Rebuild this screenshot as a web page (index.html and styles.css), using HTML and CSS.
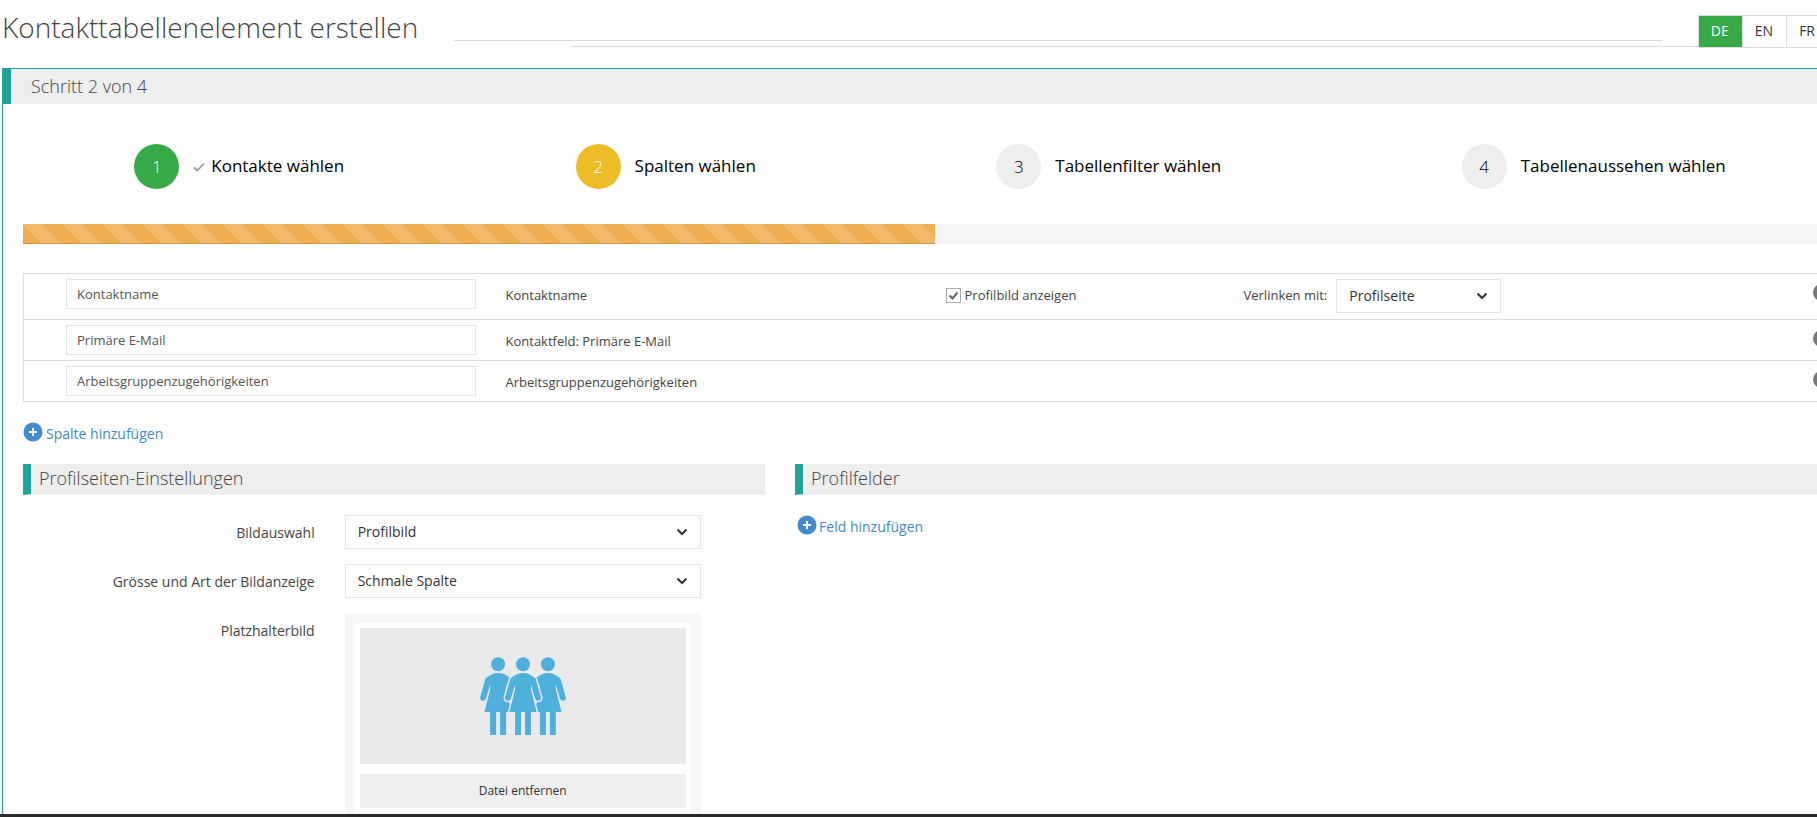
FILE: index.html
```html
<!DOCTYPE html>
<html lang="de">
<head>
    <meta charset="UTF-8">
    <meta name="viewport" content="width=device-width, initial-scale=1.0">
    <title>Kontakttabellenelement erstellen</title>
    <link rel="stylesheet" href="styles.css">
</head>
<body>
<div class="window">
    <div class="page">
        <!-- Title and language switch -->
        <header class="page-header">
            <h1 class="page-title">Kontakttabellenelement erstellen</h1>
            <div class="rules">
                <hr class="rule rule-top">
                <hr class="rule rule-bottom">
            </div>
            <div class="languages">
                <button type="button" class="active">DE</button>
                <button type="button">EN</button>
                <button type="button">FR</button>
            </div>
        </header>

        <main class="portlet">
            <h2 class="portlet-title">Schritt 2 von 4</h2>

            <div class="portlet-body">
                <!-- Wizard steps -->
                <ol class="steps">
                    <li class="step done">
                        <span class="number">1</span>
                        <span class="desc"><svg class="check" viewBox="0 0 12 10" width="12" height="10"><path d="M1 5.5 4.3 8.5 11 1.5" fill="none" stroke="#999" stroke-width="1.8"/></svg>Kontakte wählen</span>
                    </li>
                    <li class="step active">
                        <span class="number">2</span>
                        <span class="desc">Spalten wählen</span>
                    </li>
                    <li class="step">
                        <span class="number">3</span>
                        <span class="desc">Tabellenfilter wählen</span>
                    </li>
                    <li class="step">
                        <span class="number">4</span>
                        <span class="desc">Tabellenaussehen wählen</span>
                    </li>
                </ol>

                <div class="progress">
                    <div class="progress-bar" style="width: 50%"></div>
                </div>

                <!-- Columns of the contact table -->
                <table class="columns">
                    <colgroup>
                        <col class="col-name">
                        <col class="col-field">
                        <col class="col-option">
                        <col class="col-link">
                        <col class="col-remove">
                    </colgroup>
                    <tr>
                        <td><input type="text" class="text-input" aria-label="Spaltenname 1" value="Kontaktname"></td>
                        <td>Kontaktname</td>
                        <td><label class="check-label"><input type="checkbox" class="checkbox" checked>Profilbild anzeigen</label></td>
                        <td>
                            <div class="link-field">
                                <label for="link-with">Verlinken mit:</label>
                                <select id="link-with" class="select select-link"><option>Profilseite</option></select>
                            </div>
                        </td>
                        <td><button type="button" class="remove" aria-label="Spalte entfernen"></button></td>
                    </tr>
                    <tr>
                        <td><input type="text" class="text-input" aria-label="Spaltenname 2" value="Primäre E-Mail"></td>
                        <td>Kontaktfeld: Primäre E-Mail</td>
                        <td></td>
                        <td></td>
                        <td><button type="button" class="remove" aria-label="Spalte entfernen"></button></td>
                    </tr>
                    <tr>
                        <td><input type="text" class="text-input" aria-label="Spaltenname 3" value="Arbeitsgruppenzugehörigkeiten"></td>
                        <td>Arbeitsgruppenzugehörigkeiten</td>
                        <td></td>
                        <td></td>
                        <td><button type="button" class="remove" aria-label="Spalte entfernen"></button></td>
                    </tr>
                </table>

                <a href="#" class="add-link add-column">
                    <svg viewBox="0 0 20 20" width="20" height="20"><circle cx="10" cy="10" r="9.5" fill="#428bca"/><path d="M10 6v8M6 10h8" stroke="#fff" stroke-width="2"/></svg>
                    Spalte hinzufügen
                </a>

                <div class="row">
                    <!-- Profile page settings -->
                    <section class="col-settings">
                        <h3 class="section-title">Profilseiten-Einstellungen</h3>
                        <div class="form-group">
                            <label for="image-choice">Bildauswahl</label>
                            <select id="image-choice" class="select"><option>Profilbild</option></select>
                        </div>
                        <div class="form-group">
                            <label for="image-size">Grösse und Art der Bildanzeige</label>
                            <select id="image-size" class="select"><option>Schmale Spalte</option></select>
                        </div>
                        <div class="form-group">
                            <label for="remove-file">Platzhalterbild</label>
                            <div class="upload">
                                <div class="upload-inner">
                                    <div class="preview">
                                        <svg viewBox="30 50 258 235" width="86" height="78" fill="#4fb0db">
                                            <defs>
                                                <g id="legs"><path d="M-24 214h18v71h-18zM6 214h18v71h-18z"/><circle cx="0" cy="72" r="21"/></g>
                                                <path id="dress" d="M-38 115Q-20 98 0 98Q20 98 38 115L54 171Q55 181 46 182Q39 182 36 174L24 133V148L41 216H-41L-24 148V133L-36 174Q-39 182 -46 182Q-55 181 -54 171Z"/>
                                            </defs>
                                            <use href="#legs" x="84"/>
                                            <use href="#dress" x="84"/>
                                            <use href="#legs" x="234"/>
                                            <use href="#dress" x="234"/>
                                            <use href="#dress" x="159" stroke="#eaeaea" stroke-width="9"/>
                                            <use href="#dress" x="159"/>
                                            <use href="#legs" x="159"/>
                                        </svg>
                                    </div>
                                    <button type="button" id="remove-file" class="remove-file">Datei entfernen</button>
                                </div>
                            </div>
                        </div>
                    </section>

                    <!-- Profile fields -->
                    <section class="col-fields">
                        <h3 class="section-title">Profilfelder</h3>
                        <a href="#" class="add-link add-field">
                            <svg viewBox="0 0 20 20" width="20" height="20"><circle cx="10" cy="10" r="9.5" fill="#428bca"/><path d="M10 6v8M6 10h8" stroke="#fff" stroke-width="2"/></svg>
                            Feld hinzufügen
                        </a>
                    </section>
                </div>
            </div>
        </main>
    </div>
</div>
</body>
</html>
```

FILE: styles.css
```css
* {
    box-sizing: border-box;
}
body {
    margin: 0;
    font-family: "Open Sans", sans-serif;
    font-size: 14px;
    line-height: 20px;
    color: #444;
    background-color: #fff;
}
button, input, select {
    font-family: inherit;
    border-radius: 0;
    margin: 0;
}
.window {
    height: 100vh;
    overflow: hidden;
    border-bottom: 3px solid #2a2a2a;
}
/* the content is a little wider than the window and is cut off on the right */
.page {
    margin-right: -50px;
    padding-left: 2px;
}

/* Header */
.page-header {
    display: flex;
    align-items: flex-start;
    height: 68px;
    padding-right: 37px;
}
.page-title {
    margin: 0;
    padding-top: 7px;
    font-size: 28px;
    line-height: 40px;
    font-weight: 300;
}
.rules {
    flex: 1;
    padding-top: 40px;
}
.rule {
    height: 1px;
    border: 0;
    background-color: #ddd;
}
.rule-top {
    margin: 0 36px 5px;
}
.rule-bottom {
    margin: 0 0 0 154px;
}
.languages {
    display: flex;
    margin-top: 15px;
    border: 1px solid #ddd;
}
.languages button {
    height: 31px;
    padding: 0 13px 2px 12px;
    border: 0;
    border-right: 1px solid #ddd;
    font-size: 14px;
    color: #333;
    background-color: #fff;
}
.languages .active {
    color: #fff;
    background-color: #35aa47;
}

/* Panel */
.portlet {
    border: 1px solid #1ba39c;
}
.portlet-title {
    margin: 0;
    padding: 0 20px;
    border-left: 8px solid #1ba39c;
    font-size: 18px;
    line-height: 35px;
    font-weight: 300;
    background-color: #eee;
}
.portlet-body {
    padding: 40px 20px;
}

/* Steps */
.steps {
    display: flex;
    margin: 0 0 35px;
    padding: 0;
    list-style: none;
}
.step {
    display: flex;
    flex: 1 1 auto;
    align-items: center;
    justify-content: center;
    gap: 14px;
    font-size: 17px;
    color: #000;
}
/* keeps the check mark out of the width of the step */
.done {
    margin: 0 -9px;
}
.number {
    width: 45px;
    border-radius: 50%;
    line-height: 45px;
    text-align: center;
    font-weight: 300;
    background-color: #eee;
}
.desc {
    padding-bottom: 2px;
}
.done .number {
    color: #fff;
    background-color: #35aa47;
}
.active .number {
    color: #fff;
    background-color: #ecbc29;
}
.check {
    margin-right: 6px;
}
.progress {
    height: 20px;
    margin-bottom: 29px;
    background-color: #f4f4f4;
}
.progress-bar {
    height: 100%;
    background-color: #f0ad4e;
    background-image: linear-gradient(45deg, rgba(255,255,255,.15) 25%, transparent 25%, transparent 50%, rgba(255,255,255,.15) 50%, rgba(255,255,255,.15) 75%, transparent 75%, transparent);
    background-size: 40px 40px;
    box-shadow: inset 0 -1px 0 rgba(0,0,0,.15);
}

/* Columns table */
.columns {
    width: 100%;
    table-layout: fixed;
    border-collapse: collapse;
    border: 1px solid #ddd;
    font-size: 13px;
}
.columns tr {
    border-bottom: 1px solid #ddd;
}
.columns td {
    padding: 5px 0;
    vertical-align: top;
    line-height: 30px;
}
.columns td:first-child {
    padding-left: 42px;
}
.columns td + td {
    padding-top: 6px;
    padding-bottom: 4px;
}
.col-name {
    width: 482px;
}
.col-field {
    width: 440px;
}
.col-option {
    width: 298px;
}
.col-remove {
    width: 33px;
}
.text-input {
    display: block;
    width: 410px;
    height: 30px;
    padding: 0 10px;
    border: 1px solid #e5e5e5;
    font-size: 13px;
    color: #555;
}
.check-label {
    display: flex;
    align-items: center;
    gap: 4px;
}
.checkbox {
    appearance: none;
    width: 15px;
    height: 15px;
    border: 1px solid #aaa;
    background: #fff url("data:image/svg+xml,%3Csvg xmlns='http://www.w3.org/2000/svg' viewBox='0 0 13 13'%3E%3Cpath d='M2.5 6.5 5.5 9.5 10.5 3.5' fill='none' stroke='%23666' stroke-width='2'/%3E%3C/svg%3E");
}
.link-field {
    display: flex;
    gap: 9px;
    margin: -1px 0 2px;
    line-height: 32px;
}
.select {
    appearance: none;
    width: 100%;
    height: 34px;
    padding: 0 12px 2px;
    border: 1px solid #e5e5e5;
    font-size: 14px;
    color: #333;
    background: #fff url("data:image/svg+xml,%3Csvg xmlns='http://www.w3.org/2000/svg' width='12' height='8' viewBox='0 0 12 8'%3E%3Cpath d='M1.5 1.5 6 6 10.5 1.5' fill='none' stroke='%23333' stroke-width='2'/%3E%3C/svg%3E") no-repeat right 12px center;
}
.select-link {
    width: 165px;
}
.remove {
    display: block;
    width: 17px;
    height: 17px;
    margin-top: 4px;
    padding: 0;
    border: 0;
    border-radius: 50%;
    background-color: #777;
}

/* Links */
.add-link {
    display: inline-flex;
    align-items: flex-start;
    line-height: 24px;
    color: #428bca;
    text-decoration: none;
}
.add-column {
    gap: 3px;
    margin: 20px 0 18px;
}
.add-field {
    gap: 2px;
    margin-left: 2px;
}

/* Settings */
.row {
    display: flex;
    margin: 0 -15px;
}
.col-settings {
    width: 41.6667%;
    padding: 0 15px;
}
.col-fields {
    width: 58.3333%;
    padding: 0 15px;
}
.section-title {
    margin: 0 0 20px;
    padding: 0 8px 2px;
    border-left: 8px solid #1ba39c;
    border-bottom: 1px solid #eee;
    font-size: 18px;
    line-height: 28px;
    font-weight: 300;
    background-color: #eee;
}
.form-group {
    display: grid;
    grid-template-columns: 5fr 6fr 1fr;
    margin: 0 -15px 15px;
}
.form-group > * {
    margin: 0 15px;
}
.form-group > label {
    padding-top: 8px;
    text-align: right;
}
.form-group > .select {
    width: auto;
}
.upload {
    padding: 10px;
    background-color: #f7f7f7;
}
.upload-inner {
    padding: 5px;
    background-color: #fff;
}
.preview {
    display: flex;
    justify-content: center;
    padding: 29px 0;
    margin-bottom: 10px;
    background-color: #eaeaea;
}
.remove-file {
    display: block;
    width: 100%;
    height: 34px;
    border: 0;
    padding: 0 0 2px;
    font-size: 12px;
    color: #333;
    background-color: #efefef;
}
```
